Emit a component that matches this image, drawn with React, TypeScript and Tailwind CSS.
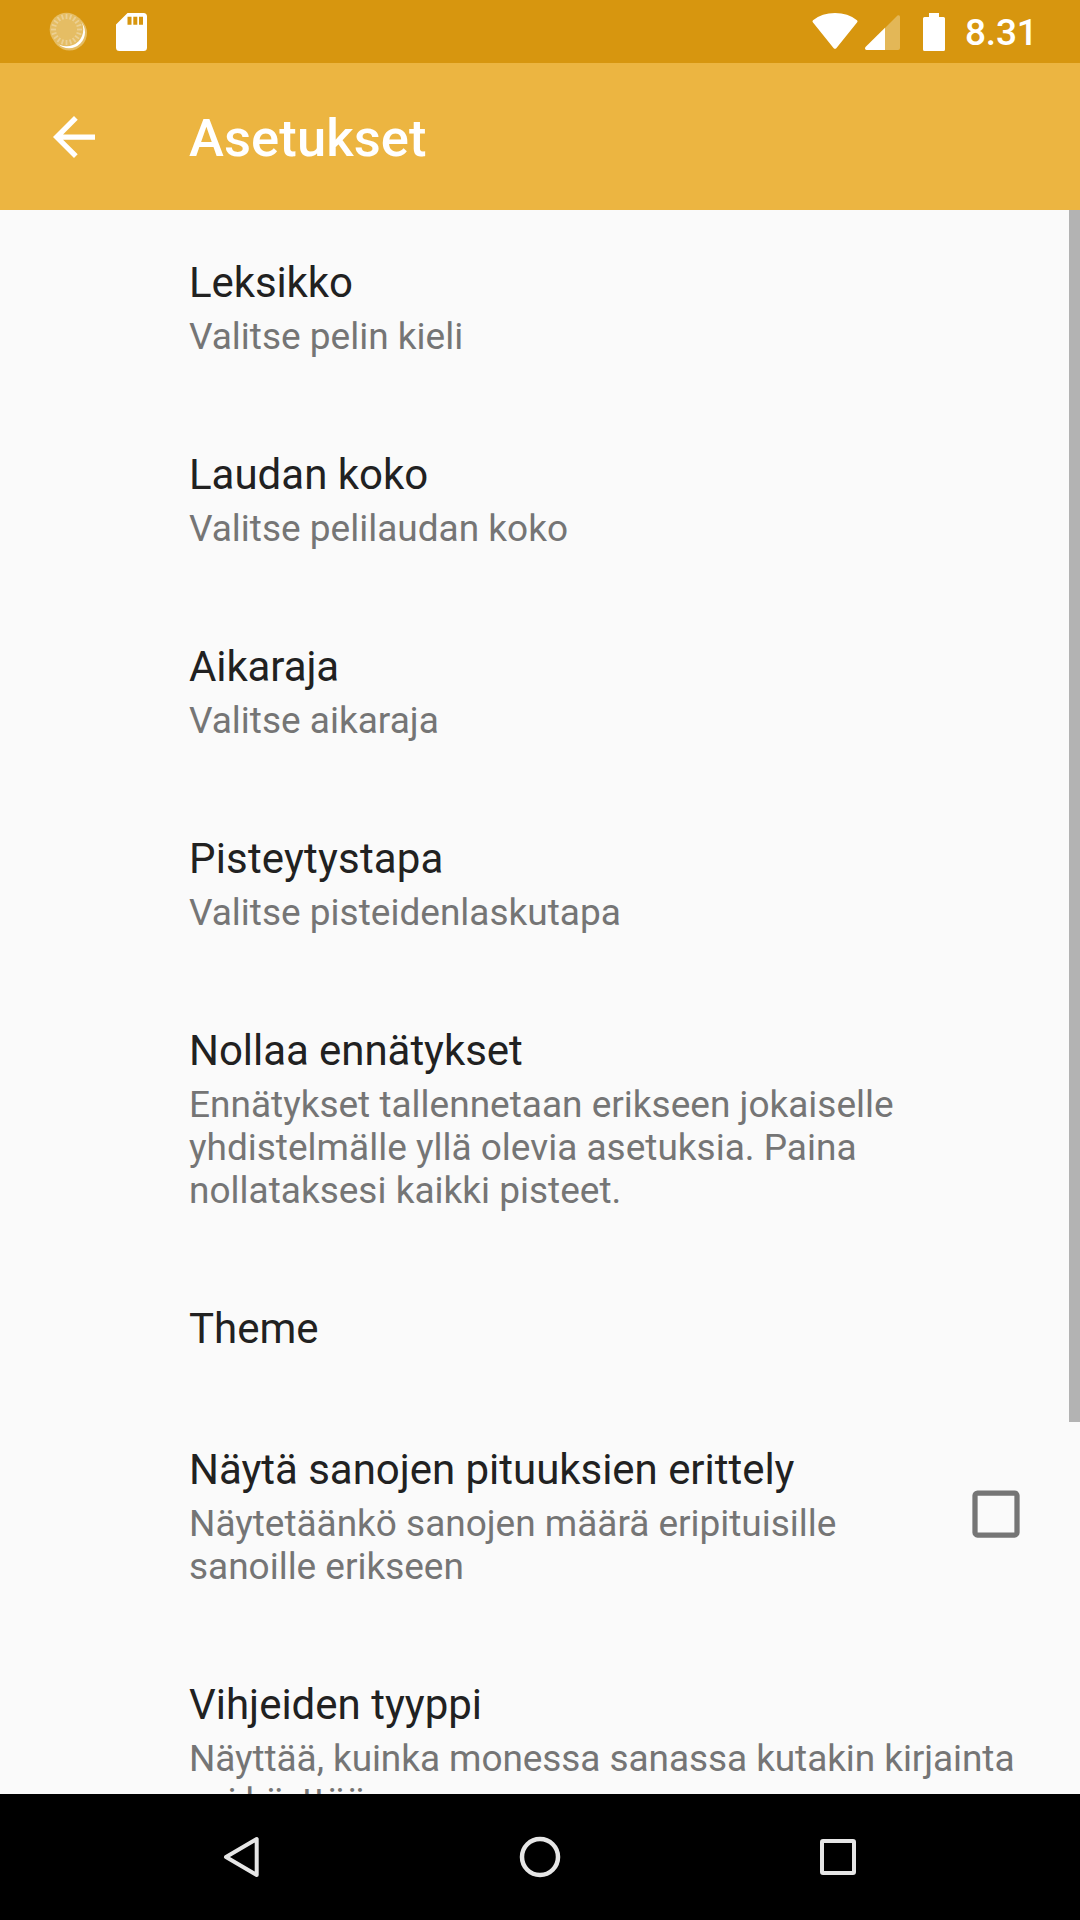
const items: { title: string; lines?: string[]; h: string; check?: boolean; titleTracking?: string; tracking?: string }[] = [
  { title: 'Leksikko', lines: ['Valitse pelin kieli'], h: 'h-[192px]', titleTracking: 'tracking-[-0.1px]' },
  { title: 'Laudan koko', lines: ['Valitse pelilaudan koko'], h: 'h-[192px]' },
  { title: 'Aikaraja', lines: ['Valitse aikaraja'], h: 'h-[192px]', titleTracking: 'tracking-[-0.1px]' },
  { title: 'Pisteytystapa', lines: ['Valitse pisteidenlaskutapa'], h: 'h-[192px]', titleTracking: 'tracking-[0.18px]' },
  {
    title: 'Nollaa ennätykset',
    lines: ['Ennätykset tallennetaan erikseen jokaiselle', 'yhdistelmälle yllä olevia asetuksia. Paina', 'nollataksesi kaikki pisteet.'],
    h: 'h-[278px]',
    titleTracking: 'tracking-[-0.05px]',
  },
  { title: 'Theme', h: 'h-[141px]' },
  {
    title: 'Näytä sanojen pituuksien erittely',
    lines: ['Näytetäänkö sanojen määrä eripituisille', 'sanoille erikseen'],
    h: 'h-[235px]',
    check: true,
    titleTracking: 'tracking-[-0.03px]',
    tracking: 'tracking-[-0.02px]',
  },
  {
    title: 'Vihjeiden tyyppi',
    lines: ['Näyttää, kuinka monessa sanassa kutakin kirjainta', 'voi käyttää'],
    h: 'h-[235px]',
    tracking: 'tracking-[-0.08px]',
  },
];

const rays = Array.from({ length: 20 }, (_, i) => i * 18);

export default function App() {
  return (
    <div className="flex h-[1920px] w-[1080px] flex-col overflow-hidden bg-[#fafafa] font-[Roboto,sans-serif]">
      <header className="flex h-[63px] shrink-0 items-center bg-[#d7960f] text-white">
        <svg className="ml-[49px]" width="39" height="39" viewBox="0 0 39 39">
          <circle cx="20.500" cy="21" r="17.500" fill="#e5bd64" />
          <circle cx="20" cy="20.200" r="16" fill="white" />
          <circle cx="17.500" cy="17.500" r="16.800" fill="#e5bd64" />
          {rays.map((a) => (
            <path key={a} d="M17.500 2v5" stroke="#ecd093" strokeWidth="1.800" transform={`rotate(${a} 17.500 17.500)`} />
          ))}
        </svg>
        <svg className="ml-[28px]" width="31" height="38" viewBox="0 0 31 38">
          <path d="M11.500 0H27.500a3.500 3.500 0 0 1 3.500 3.500V34.500a3.500 3.500 0 0 1-3.500 3.500H3.500a3.500 3.500 0 0 1-3.500-3.500V11.500Z" fill="white" />
          <path d="M11.500 3.800h4v8h-4zM17.300 3.800h4v8h-4zM23 3.800h4v8h-4z" fill="#d7960f" />
        </svg>
        <svg className="ml-auto" width="46" height="37" viewBox="0 0 46 37">
          <path d="M1 7.200Q10 0 23 0T45 7.200Q46 8 45.200 9.200L24.300 35.200Q23 36.500 21.700 35.200L.8 9.200Q0 8 1 7.200Z" fill="white" />
        </svg>
        <svg className="ml-[7px] mt-[2px]" width="35" height="35" viewBox="0 0 35 35">
          <path d="M20 13 32.500.6Q35-.6 35 2V33a2 2 0 0 1-2 2H20Z" fill="#e3b757" />
          <path d="M20 12.800V35H1.500Q-.8 34.500.5 32Z" fill="white" />
        </svg>
        <svg className="ml-[23px]" width="22" height="38" viewBox="0 0 22 38">
          <path d="M6 0h10v4h4.500a1.500 1.500 0 0 1 1.500 1.500v31a1.500 1.500 0 0 1-1.500 1.500h-19A1.500 1.500 0 0 1 0 36.500v-31A1.500 1.500 0 0 1 1.500 4H6z" fill="white" />
        </svg>
        <span className="ml-[20px] mt-[3px] w-[115px] text-[37px] font-medium leading-[44px] tracking-[-0.2px]">8.31</span>
      </header>
      <div className="flex h-[147px] shrink-0 items-center bg-[#ecb541] text-white">
        <svg className="ml-[53px]" width="42" height="42" viewBox="4 4 16 16">
          <path d="M20 11H7.830l5.590-5.590L12 4l-8 8 8 8 1.410-1.410L7.830 13H20z" fill="white" />
        </svg>
        <h1 className="ml-[94px] mt-[2px] text-[52.500px] font-medium leading-[62px] tracking-[0.12px]">Asetukset</h1>
      </div>
      <div className="flex min-h-0 flex-1 overflow-hidden">
        <main className="flex-1 pt-[48px]">
          {items.map((it) => (
            <section key={it.title} className={`${it.h} flex pl-[189px]`}>
              <div className="flex-1 whitespace-nowrap">
                <h2 className={`text-[42px] leading-[50px] text-[#212121] ${it.titleTracking ?? ''}`}>{it.title}</h2>
                <div className={`mt-[7px] text-[37px] leading-[43px] text-[#757575] ${it.tracking ?? ''}`}>
                  {it.lines?.map((l) => <p key={l}>{l}</p>)}
                </div>
              </div>
              {it.check && (
                <svg className="mr-[49px] mt-[45px]" width="48" height="48" viewBox="0 0 48 48">
                  <rect x="3" y="3" width="42" height="42" rx="2.500" fill="none" stroke="#757575" strokeWidth="5.250" />
                </svg>
              )}
            </section>
          ))}
        </main>
        <div className="h-[1212px] w-[11px] bg-[#b3b3b3]" />
      </div>
      <nav className="flex h-[126px] shrink-0 items-center bg-black">
        <svg className="ml-[222px]" width="38" height="42" viewBox="0 0 38 42" fill="none" stroke="#e6e6e6" strokeWidth="4">
          <path d="M34.700 3V39L4 21Z" strokeLinejoin="round" />
        </svg>
        <svg className="ml-[259px]" width="42" height="42" viewBox="0 0 42 42" fill="none" stroke="#e6e6e6" strokeWidth="4.500">
          <circle cx="21" cy="21" r="18" />
        </svg>
        <svg className="ml-[259px]" width="36" height="36" viewBox="0 0 36 36" fill="none" stroke="#e6e6e6" strokeWidth="4">
          <rect x="2" y="2" width="32" height="32" rx="1" />
        </svg>
      </nav>
    </div>
  );
}
